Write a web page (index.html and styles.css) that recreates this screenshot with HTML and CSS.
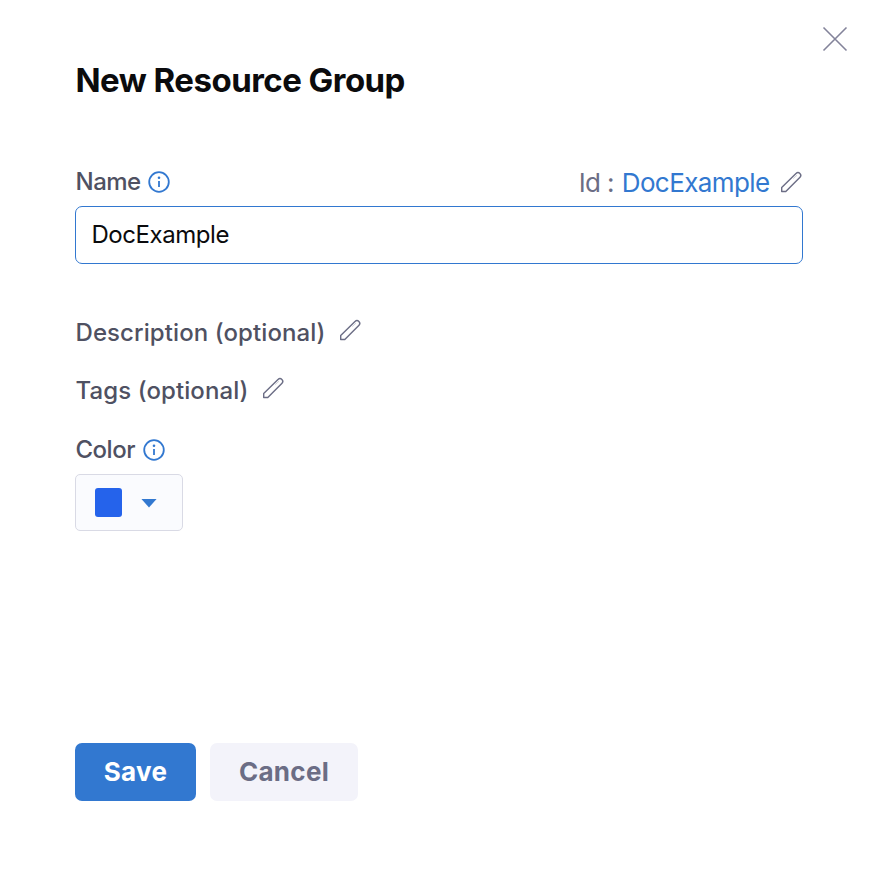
FILE: index.html
```html
<!DOCTYPE html>
<html lang="en">
<head>
<meta charset="utf-8">
<title>New Resource Group</title>
<link rel="stylesheet" href="styles.css">
</head>
<body>
<svg class="defs" aria-hidden="true">
  <symbol id="pencil" viewBox="0 0 24 24"><path d="M2.7 21.5 V17.4 L17 3.4 Q19 1.6 20.9 3.4 Q22.8 5.2 21 7.2 L6.8 21.5 Z" fill="none" stroke="currentColor" stroke-width="1.4" stroke-linejoin="round"/><path d="M14.2 8.6 L18 5.2" fill="none" stroke="currentColor" stroke-width="1" opacity=".3"/></symbol>
  <symbol id="info" viewBox="0 0 24 24"><circle cx="12" cy="12" r="9.8" fill="none" stroke="currentColor" stroke-width="1.8"/><circle cx="12" cy="7.8" r="1.3" fill="currentColor"/><path d="M12 11V17" stroke="currentColor" stroke-width="1.8"/></symbol>
</svg>
<main class="dialog">
  <button class="close" aria-label="Close"><svg viewBox="0 0 26 26"><path d="M1.5 1.5 24.5 24.5M24.5 1.5 1.5 24.5"/></svg></button>
  <h1>New Resource Group</h1>
  <div class="name-row">
    <label class="label tight" for="name">Name</label>
    <svg class="info"><use href="#info"/></svg>
    <div class="id"><span>Id : </span><span class="value">DocExample</span></div>
    <svg class="pencil"><use href="#pencil"/></svg>
  </div>
  <input id="name" value="DocExample">
  <div class="row description"><span class="label">Description (optional)</span><svg class="pencil"><use href="#pencil"/></svg></div>
  <div class="row tags"><span class="label">Tags (optional)</span><svg class="pencil"><use href="#pencil"/></svg></div>
  <div class="row color"><span class="label tight">Color</span><svg class="info"><use href="#info"/></svg></div>
  <button class="picker" aria-label="Color"><span class="swatch"></span><span class="caret"></span></button>
  <div class="actions"><button class="save">Save</button><button class="cancel">Cancel</button></div>
</main>
</body>
</html>
```
FILE: styles.css
```css
* { box-sizing: border-box; }
body { margin: 0; background: #fff; font-family: Inter, sans-serif; font-feature-settings: "calt" 0; }
button { font: inherit; margin: 0; padding: 0; border: 0; }
.defs { position: absolute; width: 0; height: 0; }
.dialog { position: relative; height: 872px; padding: 60px 74px 0 75px; }
.close { position: absolute; left: 821.5px; top: 26px; width: 26px; height: 26px; background: none; }
.close svg { display: block; width: 26px; height: 26px; stroke: #83839a; stroke-width: 1.6; fill: none; }
h1 { margin: 0; height: 40px; padding-left: 0.5px; font-size: 33px; line-height: 40px; font-weight: 650; color: #0b0b0d; letter-spacing: -0.53px; white-space: nowrap; }
.name-row { display: flex; align-items: center; height: 32px; margin-top: 66px; }
.label { font-size: 24px; line-height: 30px; font-weight: 500; color: #4f5162; letter-spacing: 0.09px; white-space: nowrap; padding-left: 0.5px; }
.tight { letter-spacing: -0.5px; }
.info { width: 24px; height: 24px; margin-left: 6px; color: #3278d0; flex: none; }
.color .info { margin-left: 7px; }
.pencil { width: 24px; height: 24px; color: #6b6d85; flex: none; }
.id { margin-left: auto; padding-top: 1px; font-size: 26px; color: #6b6d85; white-space: nowrap; letter-spacing: -0.6px; }
.value { color: #3278d0; }
.id .value { margin-left: 1px; }
.name-row .pencil { margin-left: 9.5px; }
input { display: block; width: 728px; height: 58px; margin-top: 8px; padding: 0 15px 2px 15.5px; border: 1px solid #3278d0; border-radius: 7px; outline: 0; font: 24px Inter, sans-serif; color: #0b0b0d; letter-spacing: -0.45px; }
.row { display: flex; align-items: center; height: 30px; }
.row .pencil { margin: -6px 0 0 13px; }
.description { margin-top: 54px; }
.tags { margin-top: 28px; }
.color { margin-top: 29px; }
.picker { display: flex; align-items: center; width: 108px; height: 57px; margin-top: 9px; padding-left: 19px; border: 1px solid #d9dae5; border-radius: 5px; background: #fafbfe; }
.swatch { width: 27px; height: 29px; border-radius: 3px; background: #2563eb; }
.caret { width: 16px; height: 9px; margin: 1px 0 0 19px; background: #3278d0; clip-path: polygon(0 0, 100% 0, 50% 100%); }
.actions { display: flex; gap: 14px; margin-top: 212px; }
.actions button { height: 58px; padding-bottom: 1px; border-radius: 7px; font-size: 26px; font-weight: 650; letter-spacing: 0.3px; }
.actions .save { width: 121px; background: #3278d0; color: #fff; }
.actions .cancel { width: 148px; background: #f3f3fa; color: #6b6d85; }
```
